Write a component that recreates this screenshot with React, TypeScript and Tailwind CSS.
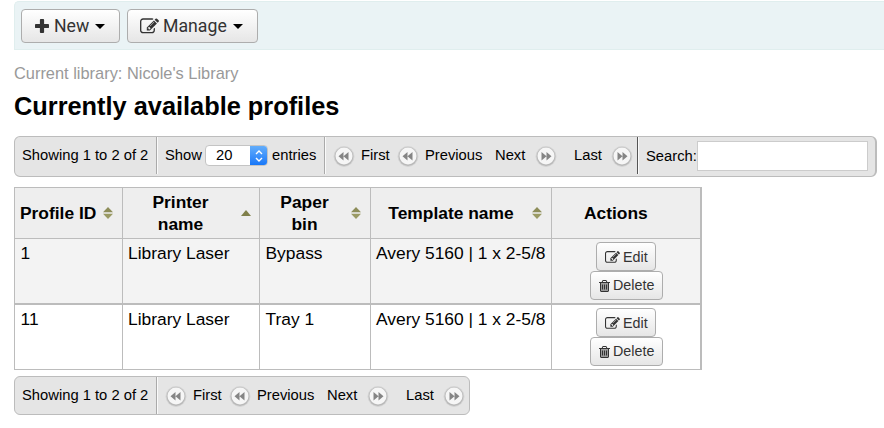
import React from "react";

const FONT = "font-['Liberation_Sans',Arial,sans-serif]";

function EditIcon({ className }: { className: string }) {
  return (
    <svg viewBox="0 0 1792 1792" className={className} fill="currentColor">
      <path d="M888 1184l116-116-152-152-116 116v56h96v96h56zm440-720q-16-16-33 1l-350 350q-17 17-1 33t33-1l350-350q17-17 1-33zm80 594v190q0 119-84.5 203.5t-203.5 84.5h-832q-119 0-203.5-84.5t-84.5-203.5v-832q0-119 84.5-203.5t203.5-84.5h832q63 0 117 25 15 7 18 23 3 17-9 29l-49 49q-14 14-32 8-23-6-45-6h-832q-66 0-113 47t-47 113v832q0 66 47 113t113 47h832q66 0 113-47t47-113v-126q0-13 9-22l64-64q15-15 35-7t20 29zm-96-738l288 288-672 672h-288v-288zm444 132l-92 92-288-288 92-92q28-28 68-28t68 28l152 152q28 28 28 68t-28 68z" />
    </svg>
  );
}

function TrashIcon({ className }: { className: string }) {
  return (
    <svg viewBox="192 128 1408 1536" className={className} fill="currentColor">
      <path d="M704 736v576q0 14-9 23t-23 9h-64q-14 0-23-9t-9-23v-576q0-14 9-23t23-9h64q14 0 23 9t9 23zm256 0v576q0 14-9 23t-23 9h-64q-14 0-23-9t-9-23v-576q0-14 9-23t23-9h64q14 0 23 9t9 23zm256 0v576q0 14-9 23t-23 9h-64q-14 0-23-9t-9-23v-576q0-14 9-23t23-9h64q14 0 23 9t9 23zm128 724v-948h-896v948q0 22 7 40.5t14.5 27 10.5 8.5h832q3 0 10.5-8.5t14.5-27 7-40.5zm-672-1076h448l-48-117q-7-9-17-11h-317q-10 2-17 11zm928 32v64q0 14-9 23t-23 9h-96v948q0 83-47 143.5t-113 60.5h-832q-66 0-113-58.5t-47-141.5v-952h-96q-14 0-23-9t-9-23v-64q0-14 9-23t23-9h309l70-167q15-37 54-63t79-26h320q40 0 79 26t54 63l70 167h309q14 0 23 9t9 23z" />
      <path d="M448 512h896v1024h-896z" fillOpacity="0.45" />
    </svg>
  );
}

function PlusIcon() {
  return (
    <svg viewBox="0 0 14 14" className="h-3.5 w-3.5" fill="currentColor">
      <path d="M5.8 0h2.4q.9 0 .9.9v4h4q.9 0 .9.9v2.4q0 .9-.9.9h-4v4q0 .9-.9.9H5.8q-.9 0-.9-.9v-4h-4Q0 9.100 0 8.200V5.800q0-.9.9-.9h4v-4q0-.9.9-.9z" />
    </svg>
  );
}

function Caret() {
  return (
    <svg viewBox="0 0 10 5" className="h-[5px] w-2.5" fill="#000">
      <path d="M0 0h10L5 5z" />
    </svg>
  );
}

function PageIcon({ forward = false }: { forward?: boolean }) {
  return (
    <svg viewBox="0 0 22 22" className="h-[22px] w-[22px] shrink-0">
      <circle cx="11" cy="11.500" r="10.400" fill="#d3d3d3" />
      <circle cx="11" cy="11.500" r="9.400" fill="#b9b9b9" />
      <circle cx="11" cy="11" r="8.500" fill="#f6f6f6" />
      <path
        d={forward ? "M6.500 7v8.500l5-4.250zM11.500 7v8.500l5-4.250z" : "M10.500 7v8.500l-5-4.250zM15.500 7v8.500l-5-4.250z"}
        fill="#858585"
      />
    </svg>
  );
}

function SortIcon({ asc = false }: { asc?: boolean }) {
  return (
    <svg viewBox="0 0 10 12" className="h-3 w-2.5 shrink-0">
      {asc ? (
        <path d="M0 9l5-6 5 6z" fill="#80804a" />
      ) : (
        <>
          <path d="M0 5.300L5 0l5 5.300z" fill="#8d8d59" />
          <path d="M0 6.700h10L5 12z" fill="#9a9a64" />
        </>
      )}
    </svg>
  );
}

const BTN =
  "flex items-center rounded-[4px] border border-[#adadad] bg-linear-to-b from-white to-[#e6e6e6] text-[#333]";

function Pager({ className }: { className: string }) {
  return (
    <div className={`flex h-full items-center ${className}`}>
      <div className="flex w-[64px] items-center">
        <PageIcon />
        <span className="ml-[6px]">First</span>
      </div>
      <div className="flex w-[98px] items-center">
        <PageIcon />
        <span className="ml-[6px]">Previous</span>
      </div>
      <div className="flex w-[79px] items-center">
        <span className="w-[40px]">Next</span>
        <PageIcon forward />
      </div>
      <div className="flex items-center">
        <span className="w-[37px]">Last</span>
        <PageIcon forward />
      </div>
    </div>
  );
}

function Divider({ className = "border-[#aaa]" }: { className?: string }) {
  return <div className={`h-full w-[2px] shrink-0 border-l bg-[#fafafa] ${className}`} />;
}

function RowActions() {
  return (
    <div className="flex flex-col items-center text-[14.300px] leading-none">
      <button className={`${BTN} mr-px h-[29px] w-[60px] pl-2 pt-px`}>
        <EditIcon className="mr-[3px] h-[15px] w-[15px]" />
        Edit
      </button>
      <button className={`${BTN} h-[29px] w-[73px] pl-2`}>
        <TrashIcon className="mr-[3px] h-[12px] w-[11px]" />
        Delete
      </button>
    </div>
  );
}

const rows = [
  { id: "1", printer: "Library Laser", bin: "Bypass", template: "Avery 5160 | 1 x 2-5/8", style: "h-[64px] bg-[#f3f3f3]" },
  { id: "11", printer: "Library Laser", bin: "Tray 1", template: "Avery 5160 | 1 x 2-5/8", style: "h-[66px] border-t-2 bg-white" },
];

const COLS = "grid grid-cols-[108px_137px_111px_181px_149px]";
const HEAD = "flex items-center border-r border-[#bcbcbc]";
const CELL = "border-r border-[#bcbcbc] pt-[4px] whitespace-nowrap";

export default function App() {
  return (
    <div className={`${FONT} h-[428px] w-[884px] overflow-hidden bg-white pl-3.5 text-black`}>
      <div className="mt-px flex h-[49px] gap-[7px] rounded-tl-[5px] border border-r-0 border-[#e0eeee] bg-[#eaf3f5] pl-1.5 pt-[7px] font-[Roboto,sans-serif] text-[17.700px]">
        <button className={`${BTN} h-[34px] w-[99px] pl-[13px]`}>
          <PlusIcon />
          <span className="ml-[5px] w-[41px] text-left">New</span>
          <Caret />
        </button>
        <button className={`${BTN} h-[34px] w-[131px] pl-[12px]`}>
          <EditIcon className="mr-[4px] h-[19px] w-[19px]" />
          <span className="w-[70px] text-left">Manage</span>
          <Caret />
        </button>
      </div>

      <div className="mt-[13px] h-5 text-[16.400px] leading-5 text-[#999]">Current library: Nicole's Library</div>
      <h1 className="mt-[8px] h-[30px] text-[25.350px] font-bold leading-[30px]">Currently available profiles</h1>

      <div className="mt-[15px] flex h-[41px] w-[863px] rounded-[6px] border border-r-2 border-[#bcbcbc] bg-[#e5e5e5] pb-[2px] text-[14.750px] leading-none whitespace-nowrap">
        <div className="flex w-[141px] items-center pl-[7px]">Showing 1 to 2 of 2</div>
        <Divider />
        <div className="flex w-[166px] items-center pl-[7px]">
          <span className="w-[40px]">Show</span>
          <div className="flex h-[21px] w-[63px] items-center overflow-hidden rounded-[4px] border border-[#c4c4c4] bg-white">
            <span className="flex-1 pl-[10px]">20</span>
            <div className="flex h-[21px] w-[17px] items-center justify-center bg-linear-to-b from-[#66b0fb] to-[#0f74f8]">
              <svg viewBox="0 0 8 12" className="h-3 w-2" fill="none" stroke="white" strokeWidth="1.400">
                <path d="M1 4l3-3 3 3M1 8l3 3 3-3" />
              </svg>
            </div>
          </div>
          <span className="ml-1">entries</span>
        </div>
        <Divider />
        <Pager className="w-[311px] pl-[7px]" />
        <Divider className="border-[#555]" />
        <div className="flex items-center pl-[7px]">
          <span className="w-[51px] pt-[2px]">Search:</span>
          <input className="mt-px h-[30px] w-[171px] border border-[#ccc] bg-white" />
        </div>
      </div>

      <div className="mt-[10px] w-[688px] border border-r-2 border-[#bcbcbc] text-[17.400px]">
        <div className={`${COLS} h-[51px] border-b border-[#bcbcbc] bg-[#eee] text-center font-bold leading-[22px]`}>
          <div className={`${HEAD} pl-[5px]`}>
            <span className="w-[83px] text-left whitespace-nowrap">Profile ID</span>
            <SortIcon />
          </div>
          <div className={HEAD}>
            <span className="w-[118px] pl-5 pr-[23px]">Printer name</span>
            <SortIcon asc />
          </div>
          <div className={HEAD}>
            <span className="w-[91px] pl-[15px] pr-[17px]">Paper bin</span>
            <SortIcon />
          </div>
          <div className={HEAD}>
            <span className="w-[161px] pr-[1px]">Template name</span>
            <SortIcon />
          </div>
          <div className="flex items-center pl-[32px]">Actions</div>
        </div>
        {rows.map((r) => (
          <div key={r.id} className={`${COLS} border-[#bcbcbc] leading-[20px] ${r.style}`}>
            <div className={`${CELL} pl-[5.500px]`}>{r.id}</div>
            <div className={`${CELL} pl-[5px]`}>{r.printer}</div>
            <div className={`${CELL} pl-[5.500px]`}>{r.bin}</div>
            <div className={`${CELL} pl-[5px]`}>{r.template}</div>
            <div className="pt-[3px]">
              <RowActions />
            </div>
          </div>
        ))}
      </div>

      <div className="mt-[6px] flex h-[39px] w-[456px] rounded-[6px] border border-[#bcbcbc] bg-[#e5e5e5] text-[14.750px] leading-none whitespace-nowrap">
        <div className="flex w-[141px] items-center pl-[7px]">Showing 1 to 2 of 2</div>
        <Divider />
        <Pager className="pl-[7px]" />
      </div>
    </div>
  );
}
